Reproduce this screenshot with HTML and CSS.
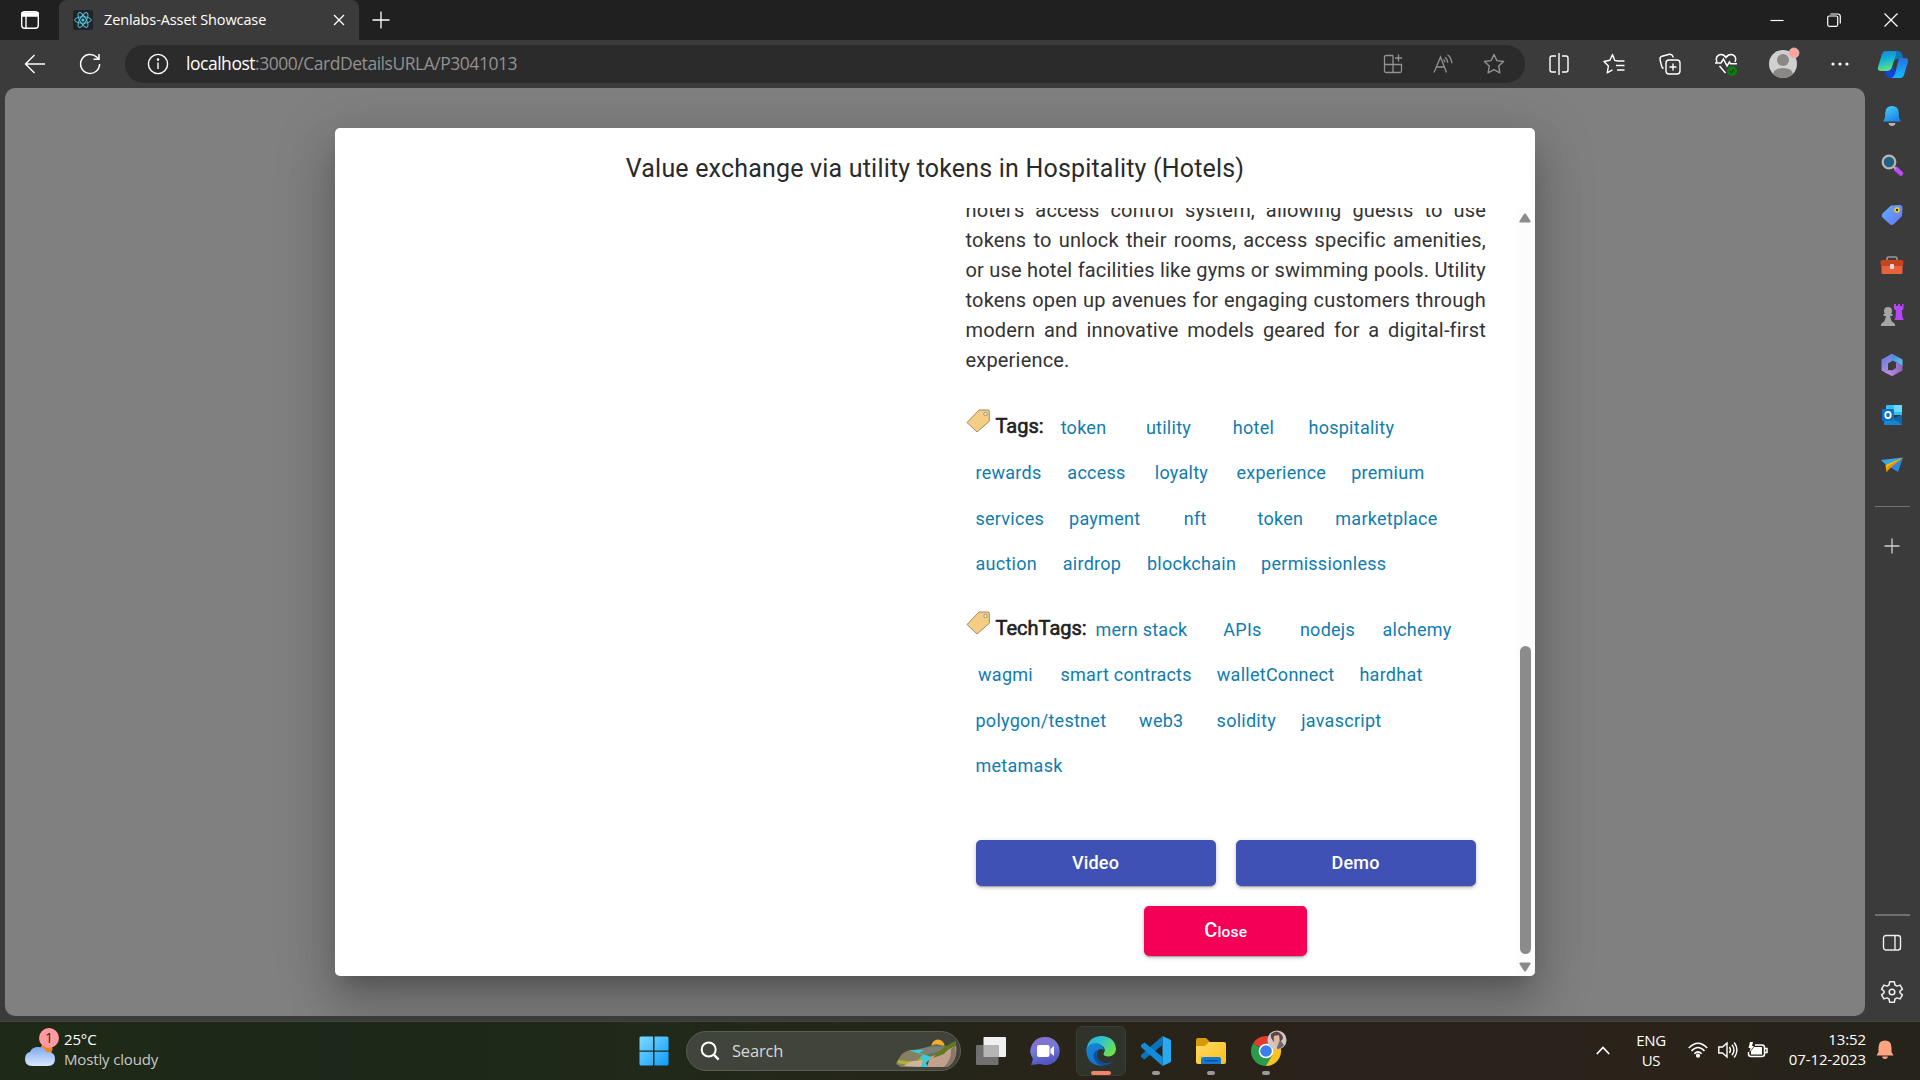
FILE: index.html
```html
<!DOCTYPE html>
<html lang="en">
<head>
<meta charset="utf-8">
<title>Zenlabs-Asset Showcase</title>
<link rel="stylesheet" href="styles.css">
</head>
<body>
<div class="screen">
  <header class="titlebar">
    <svg class="tab-actions" width="20" height="20" viewBox="0 0 20 20" fill="none" stroke="#fff" stroke-width="1.4"><rect x="1.7" y="1.7" width="16.6" height="16.6" rx="3"/><path d="M2 3h16v3H2z" fill="#fff"/><path d="M6 6v12"/></svg>
    <div class="tab">
      <svg width="20" height="20" viewBox="0 0 20 20" fill="none" stroke="#58c4dc" stroke-width="1"><rect width="20" height="20" rx="2" fill="#20232a" stroke="none"/><ellipse cx="10" cy="10" rx="8.3" ry="3.2"/><ellipse cx="10" cy="10" rx="8.3" ry="3.2" transform="rotate(60 10 10)"/><ellipse cx="10" cy="10" rx="8.3" ry="3.2" transform="rotate(120 10 10)"/><circle cx="10" cy="10" r="1.6" fill="#58c4dc" stroke="none"/></svg>
      <span class="tab-title">Zenlabs-Asset Showcase</span>
      <svg class="tab-close" width="12" height="12" viewBox="0 0 12 12" stroke="#fff" stroke-width="1.3"><path d="M1 1l10 10M11 1L1 11"/></svg>
    </div>
    <svg class="new-tab" width="18" height="18" viewBox="0 0 18 18" stroke="#fff" stroke-width="1.3"><path d="M9 .5v17M.5 9h17"/></svg>
    <div class="window-controls">
      <svg width="14" height="14" viewBox="0 0 14 14" stroke="#fff" stroke-width="1.2"><path d="M.5 7.5h13"/></svg>
      <svg width="14" height="14" viewBox="0 0 14 14" fill="none" stroke="#fff" stroke-width="1.2"><rect x=".7" y="3" width="10" height="10.3" rx="1.5"/><path d="M3.3 1h7.5Q13.3 1 13.3 3.5v7"/></svg>
      <svg width="14" height="14" viewBox="0 0 14 14" stroke="#fff" stroke-width="1.2"><path d="M.5.5l13 13M13.5.5l-13 13"/></svg>
    </div>
  </header>

  <nav class="toolbar">
    <svg class="back" width="22" height="20" viewBox="0 0 22 20" fill="none" stroke="#fff" stroke-width="1.4"><path d="M21 10H1.5M10.5 1l-9 9 9 9"/></svg>
    <svg class="reload" width="22" height="22" viewBox="0 0 22 22" fill="none" stroke="#fff" stroke-width="1.5"><path d="M20.6 11a9.5 9.5 0 1 1-3-7l2.4 2.2M20 1v5.3h-5.5"/></svg>
    <div class="address">
      <svg width="22" height="22" viewBox="0 0 22 22" fill="none" stroke="#fff" stroke-width="1.4"><circle cx="11" cy="11" r="9.6"/><path d="M11 9.5v6.5"/><circle cx="11" cy="6.6" r=".6" fill="#fff"/></svg>
      <span class="url"><b>localhost</b>:3000/CardDetailsURLA/P3041013</span>
      <div class="address-icons">
        <svg width="20" height="20" viewBox="0 0 20 20" fill="none" stroke="#929292" stroke-width="1.3"><path d="M10 1.5H3Q1.5 1.5 1.5 3v14q0 1.500 1.500 1.500h14q1.500 0 1.500-1.500v-6.500H1.500M10 1.500v17M15.500 .5v7M12 4h7"/></svg>
        <svg width="20" height="20" viewBox="0 0 20 20" fill="none" stroke="#929292" stroke-width="1.300"><path d="M1 18.500L7.500 3 13.500 18.500M3.200 13h8.200M12 3.200q2.700 2 2.700 5.600M14.500 .8q4.200 3 4.200 8.500M10.500 5.500q1.300 1 1.300 2.800"/></svg>
        <svg width="22" height="22" viewBox="0 0 22 22" fill="none" stroke="#929292" stroke-width="1.400" stroke-linejoin="round"><path d="M11 1.500l2.900 6.100 6.700.9-4.900 4.600 1.200 6.700-5.900-3.200-5.900 3.200 1.200-6.700L1.400 8.500l6.700-.9z"/></svg>
      </div>
    </div>
    <div class="actions">
      <svg width="20" height="22" viewBox="0 0 20 22" fill="none" stroke="#fff" stroke-width="1.400"><path d="M7 3H3Q1 3 1 5v12q0 2 2 2h4M13 3h4q2 0 2 2v12q0 2-2 2h-4M10 0v22"/></svg>
      <svg width="22" height="22" viewBox="0 0 22 22" fill="none" stroke="#fff" stroke-width="1.400" stroke-linejoin="round"><path d="M14.500 7.800l-2.700-.3L9.500 1.500 6.900 7.300 1 8.500l4.400 4.600-1.200 6.700L9.500 16.800M14 8h7.500M13 12.500h8.500M14 17h7.500"/></svg>
      <svg width="22" height="22" viewBox="0 0 22 22" fill="none" stroke="#fff" stroke-width="1.400"><rect x="7" y="7" width="14" height="14" rx="3"/><path d="M14 10.500v7M10.500 14h7M4.500 15.500Q3 15 2.600 13L1 6.500Q.6 4 3 3.200L10.500 1.300Q13 1 14 3.500l.2 1"/></svg>
      <svg width="22" height="22" viewBox="0 0 22 22" fill="none" stroke="#fff" stroke-width="1.500"><path d="M1.800 9Q0 3.500 4.500 1.800 8.500.8 11 4.500 13.500.8 17.500 1.800 22 3.500 20.200 9M0 10h6l2.500-4 3.500 7 2.500-4 1.200 1.800H22M4.500 13l6 7"/><circle cx="17" cy="18" r="5" fill="#107c10" stroke="none"/><path d="M14.800 18l1.600 1.600 2.800-3.200" stroke="#174e17"/></svg>
      <svg width="32" height="32" viewBox="0 0 32 32"><circle cx="15" cy="17" r="14" fill="#d2d0ce"/><circle cx="15" cy="13" r="6" fill="#8a8886"/><path d="M5 27q1-6 10-6t10 6q-4 4-10 4T5 27z" fill="#8a8886"/><circle cx="26" cy="6" r="5" fill="#ffa39c" stroke="#c9c4c2" stroke-width=".8"/></svg>
      <svg width="18" height="4" viewBox="0 0 18 4" fill="#fff"><circle cx="2" cy="2" r="1.600"/><circle cx="9" cy="2" r="1.600"/><circle cx="16" cy="2" r="1.600"/></svg>
      <svg width="30" height="27" viewBox="0 0 30 27"><defs><linearGradient id="cpA" x1="0" y1="0" x2=".2" y2="1"><stop offset="0" stop-color="#1a7fd8"/><stop offset=".45" stop-color="#0fafd8"/><stop offset="1" stop-color="#5ee08a"/></linearGradient><linearGradient id="cpB" x1="0" y1="0" x2="0" y2="1"><stop offset="0" stop-color="#2670e0"/><stop offset="1" stop-color="#18b8ff"/></linearGradient></defs><path d="M14 0h6q3 0 4 3l1.500 5H19q-2 0-3 3L14 4z" fill="#0d78b5"/><path d="M6 20h7l2-6 4 13h-7q-3 0-4-3z" fill="#1543d8"/><path d="M7 0h9q3 0 2 3l-4 13q-1 4-5 4H3q-4 0-3-4L4 3q1-3 3-3z" fill="url(#cpA)"/><path d="M21 7h6q4 0 3 4l-4 13q-1 3-4 3h-9q3-1 4-4l3-12q1-4 1-4z" fill="url(#cpB)"/></svg>
    </div>
  </nav>

  <div class="workspace">
    <main class="page">
      <section class="dialog">
        <h2 class="dialog-title">Value exchange via utility tokens in Hospitality (Hotels)</h2>
        <div class="dialog-body">
          <div class="details">
            <p class="description">hotel’s access control system, allowing guests to use tokens to unlock their rooms, access specific amenities, or use hotel facilities like gyms or swimming pools. Utility tokens open up avenues for engaging customers through modern and innovative models geared for a digital-first experience.</p>
            <div class="tag-group">
              <div class="tag-row first"><svg width="24" height="24" viewBox="0 0 24 24"><path d="M13 1h9q1.300 0 1.300 1.300v10L11 23 1 13.500z" fill="#f5cd84" stroke="#a08a62" stroke-width="1" stroke-linejoin="round"/><circle cx="19.500" cy="5" r="1.700" fill="#fff2d5" stroke="#857c69" stroke-width=".8"/></svg><span class="label">Tags:</span><a>token</a><a>utility</a><a>hotel</a><a>hospitality</a></div>
              <div class="tag-row"><a>rewards</a><a>access</a><a>loyalty</a><a>experience</a><a>premium</a></div>
              <div class="tag-row"><a>services</a><a>payment</a><a>nft</a><a>token</a><a>marketplace</a></div>
              <div class="tag-row"><a>auction</a><a>airdrop</a><a>blockchain</a><a>permissionless</a></div>
            </div>
            <div class="tag-group">
              <div class="tag-row first"><svg width="24" height="24" viewBox="0 0 24 24"><path d="M13 1h9q1.300 0 1.300 1.300v10L11 23 1 13.500z" fill="#f5cd84" stroke="#a08a62" stroke-width="1" stroke-linejoin="round"/><circle cx="19.500" cy="5" r="1.700" fill="#fff2d5" stroke="#857c69" stroke-width=".8"/></svg><span class="label tech">TechTags:</span><a>mern stack</a><a>APIs</a><a>nodejs</a><a>alchemy</a></div>
              <div class="tag-row"><a>wagmi</a><a>smart contracts</a><a>walletConnect</a><a>hardhat</a></div>
              <div class="tag-row"><a>polygon/testnet</a><a>web3</a><a>solidity</a><a>javascript</a></div>
              <div class="tag-row"><a>metamask</a></div>
            </div>
            <div class="buttons"><button class="btn">Video</button><button class="btn">Demo</button></div>
            <button class="btn close"><span class="cap">C</span>lose</button>
          </div>
          <div class="scrollbar">
            <svg width="12" height="10" viewBox="0 0 12 10"><path d="M5 1q1-1.200 2 0l4.500 7q.5 1.500-1 1.500h-9Q0 9.500.5 8z" fill="#8b8b8b"/></svg>
            <div class="thumb"></div>
            <svg width="12" height="10" viewBox="0 0 12 10"><path d="M5 9q1 1.200 2 0l4.500-7Q12 .5 10.500.5h-9Q0 .5.500 2z" fill="#8b8b8b"/></svg>
          </div>
        </div>
      </section>
    </main>

    <aside class="sidebar">
      <div class="side-item"><svg width="20" height="22" viewBox="0 0 20 22"><defs><linearGradient id="bl" x1="0" y1="0" x2=".6" y2="1"><stop offset="0" stop-color="#4bd2f4"/><stop offset="1" stop-color="#1a86ea"/></linearGradient></defs><path d="M6.500 18h7q-.5 3-3.500 3t-3.500-3z" fill="#b6b6b6"/><path d="M10 1q6.500 0 6.800 7v4l2 4.500H1.200L3.200 12V8Q3.500 1 10 1z" fill="url(#bl)"/></svg></div>
      <div class="side-item"><svg width="22" height="22" viewBox="0 0 22 22"><path d="M15 15l5 4.500" stroke="#c04af5" stroke-width="4.500" stroke-linecap="round"/><path d="M12 12l3 3" stroke="#aaa" stroke-width="2"/><circle cx="8" cy="8" r="6.300" fill="#23607f" stroke="#b9b6b2" stroke-width="2.200"/></svg></div>
      <div class="side-item"><svg width="22" height="22" viewBox="0 0 22 22"><defs><linearGradient id="tg" x1="0" y1="0" x2="1" y2="1"><stop offset="0" stop-color="#5fb0ff"/><stop offset="1" stop-color="#6d72f4"/></linearGradient></defs><path d="M10 1.500L18.500 1q3 0 3 3l-.5 8-8 8q-2.500 2-4.500 0L1.500 13.500q-1.500-2 0-4z" fill="url(#tg)"/><circle cx="16" cy="6" r="2" fill="#333" stroke="#ffd400" stroke-width="1.500"/></svg></div>
      <div class="side-item"><svg width="24" height="20" viewBox="0 0 24 20"><path d="M7 6V3.500Q7 2 8.500 2h7Q17 2 17 3.500V6" fill="none" stroke="#999" stroke-width="1.600"/><rect x="1.500" y="9" width="21" height="10" rx="1.500" fill="#e8633c"/><path d="M2 5h20q1.500 0 1.500 1.500L23 11H1L.500 6.500Q.500 5 2 5z" fill="#c9431f"/><rect x="10" y="9" width="4" height="5" rx="1" fill="#ddd"/></svg></div>
      <div class="side-item"><svg width="24" height="24" viewBox="0 0 24 24"><path d="M14 1h2v2h2V1h2v2h2V1h1.500v5l-1.700 1.500.7 7 1.500 2.500h-9.500l1-2.500.5-7L14 6z" fill="#b545f5"/><circle cx="8" cy="8" r="4" fill="#a5a5a5"/><path d="M3.500 11h9v2H10l1.500 5 3.500 3v2H1v-2l3.500-3L6 13H3.500z" fill="#a5a5a5"/></svg></div>
      <div class="side-item"><svg width="22" height="24" viewBox="0 0 22 24"><defs><linearGradient id="ma" x1="0" y1="0" x2=".4" y2="1"><stop offset="0" stop-color="#4f7fdc"/><stop offset="1" stop-color="#b18be6"/></linearGradient><linearGradient id="mb" x1="0" y1="0" x2="1" y2="1"><stop offset="0" stop-color="#4a6fd6"/><stop offset="1" stop-color="#58d0f8"/></linearGradient><linearGradient id="mc" x1="0" y1="0" x2="1" y2="0"><stop offset="0" stop-color="#c09af0"/><stop offset="1" stop-color="#8b62b8"/></linearGradient></defs><path d="M11 .800L21.500 6.500V13l-6.500-4-4-1.500L7 9V3z" fill="url(#mb)"/><path d="M11 .800V8L7 10.500V17L5 20 .500 17.500V6.500z" fill="url(#ma)"/><path d="M21.500 12v5.500L11 23.200 4 19.500l4-2.500 3 .5 4-2.500V9.500z" fill="url(#mc)"/></svg></div>
      <div class="side-item"><svg width="22" height="22" viewBox="0 0 22 22"><path d="M6 1h14q1 0 1 1v9H5V2q0-1 1-1z" fill="#34bdf1"/><path d="M13 1h8v7h-8z" fill="#67dcff"/><path d="M3 11l9 4 9-4v9q0 1-1 1H4q-1 0-1-1z" fill="#1687cf"/><path d="M21 11v9.500L12 15z" fill="#0b68b0"/><rect x="1" y="5" width="12" height="12" rx="1" fill="#0e70c9"/><ellipse cx="7" cy="11" rx="2.700" ry="3.200" fill="none" stroke="#fff" stroke-width="1.800"/></svg></div>
      <div class="side-item"><svg width="24" height="20" viewBox="0 0 24 20"><path d="M1 5L23 2.500 7 11z" fill="#36a5ee"/><path d="M23 2.500L18 17l-8-5z" fill="#2989e5"/><path d="M23 2.500L5.500 10 6.500 17l4-4.500z" fill="#fbb800"/><path d="M6.500 17l1-5.500L23 2.500 10 13z" fill="#e69100"/></svg></div>
      <div class="divider"></div>
      <svg class="side-plus" width="16" height="16" viewBox="0 0 16 16" stroke="#d0d0d0" stroke-width="1.300"><path d="M8 .500v15M.5 8h15"/></svg>
      <div class="side-bottom">
        <div class="divider low"></div>
        <div class="side-item"><svg width="20" height="18" viewBox="0 0 20 18" fill="none" stroke="#eee" stroke-width="1.400"><rect x="1.500" y="1.500" width="17" height="14.500" rx="2.500"/><path d="M13 1.500V16"/></svg></div>
        <div class="side-item"><svg width="24" height="24" viewBox="0 0 24 24" fill="none" stroke="#eee" stroke-width="1.500" stroke-linejoin="round"><circle cx="12" cy="12" r="2.800"/><path d="M9.700 1.700h4.600l.7 3.300 1.900 1.100 3.200-1 2.300 4-2.500 2.200v1.400l2.500 2.200-2.300 4-3.200-1L15 19l-.7 3.300H9.700L9 19l-1.900-1.100-3.200 1-2.300-4 2.500-2.200v-1.400L1.600 9.100l2.300-4 3.200 1L9 5z"/></svg></div>
      </div>
    </aside>
  </div>

  <footer class="taskbar">
    <div class="weather">
      <div class="weather-icon">
        <svg width="34" height="38" viewBox="0 0 34 38"><defs><linearGradient id="cl" x1="0" y1="0" x2="0" y2="1"><stop offset="0" stop-color="#80a9ee"/><stop offset="1" stop-color="#d8e8ff"/></linearGradient></defs><circle cx="23.500" cy="18" r="6" fill="#f58220"/><path d="M9 35q-7 0-7-7 0-6 5-7 2-5 8-5 7 0 8 5h2q7 0 7 7 0 7-7 7z" fill="url(#cl)"/></svg>
        <span class="badge">1</span>
      </div>
      <div class="weather-text"><span>25°C</span><span class="dim">Mostly cloudy</span></div>
    </div>
    <div class="apps">
      <svg width="30" height="30" viewBox="0 0 30 30"><defs><linearGradient id="wn" x1="0" y1="0" x2="1" y2="1"><stop offset="0" stop-color="#7cdbff"/><stop offset="1" stop-color="#0e9bff"/></linearGradient></defs><path d="M2 .500h12v14H.500V2Q.500.500 2 .500zM15.500.500H28q1.500 0 1.500 1.500v12.500h-14zM.500 15.800H14v13.700H2Q.500 29.500.500 28zM15.500 15.800h14V28q0 1.500-1.500 1.500H15.500z" fill="url(#wn)"/></svg>
      <div class="search">
        <svg width="20" height="20" viewBox="0 0 20 20" fill="none" stroke="#fff" stroke-width="2"><circle cx="8.700" cy="8.500" r="7"/><path d="M13.700 13.700l5 5" stroke-width="2.400"/></svg>
        <span>Search</span>
        <svg class="scene" width="62" height="30" viewBox="0 0 62 30"><circle cx="43" cy="8" r="6.500" fill="#f9ab2d"/><path d="M10 14l19-4 12-4 14 3-2 7-20 4z" fill="#667350"/><path d="M14 13l20-4 20-1-8 5-20 5z" fill="#7a7f78"/><path d="M1 26q6-14 15-14l17 2-3 15H6z" fill="#867f62"/><path d="M3 22l16 2 12-7v3l-13 8-16-3z" fill="#b1b130"/><path d="M9 28q7-6 13-5l6-1-1 7z" fill="#cfb59d"/><path d="M14 12h15l-5 3 13 4-6 6 2 4h-8q4-4 3-7l-3-3 3-2-9-3z" fill="#36ccd8"/><path d="M32 29l3-10 14-5 12-7q2 16-9 22z" fill="#c1a18e"/><path d="M49 29q8-8 7-18l4-3q3 14-7 21z" fill="#8d7568"/><path d="M38 20q8-11 23-17v5q-8 2-12 8z" fill="#607b1b"/></svg>
      </div>
      <svg class="task-view" width="32" height="30" viewBox="0 0 32 30"><rect x="8.500" y="1" width="22.500" height="20" rx="1" fill="#f0f0f0"/><rect x="1" y="9" width="22.500" height="20" rx="1" fill="#707070"/><path d="M8.500 9h15v12h-15z" fill="#b5b5b5"/></svg>
      <svg class="chat" width="30" height="30" viewBox="0 0 30 30"><defs><linearGradient id="ct" x1="0" y1="0" x2=".3" y2="1"><stop offset="0" stop-color="#8a6bcb"/><stop offset=".5" stop-color="#7779d8"/><stop offset="1" stop-color="#5356c4"/></linearGradient></defs><path d="M15.500 1a14 14 0 1 1-5 27L1 29l2-6A14 14 0 0 1 15.500 1z" fill="url(#ct)"/><rect x="7" y="9" width="12.500" height="12" rx="2" fill="#fff"/><path d="M20.500 13l3.500-3v10l-3.500-3z" fill="#fff"/></svg>
      <div class="app active"><svg width="30" height="30" viewBox="0 0 30 30"><defs><linearGradient id="ea" x1="0" y1="0" x2="1" y2=".6"><stop offset="0" stop-color="#2ba9e0"/><stop offset=".5" stop-color="#30c6c8"/><stop offset="1" stop-color="#6fe04a"/></linearGradient><linearGradient id="eb" x1="0" y1="0" x2=".5" y2="1"><stop offset="0" stop-color="#1389d8"/><stop offset="1" stop-color="#1670ce"/></linearGradient></defs><path d="M.500 14Q2 0 16 0q13 1 14 13-.5 7-7 7.500-7 0-5-4 2-3-1-6-7-6-16.500 3.500z" fill="url(#ea)"/><path d="M.300 14q2-7 10-7 7 1 7.500 7-5-3-7 2-1 8 6 13.800Q1 30 .300 14z" fill="url(#eb)"/><path d="M11 14q-3 9 6 12.500 6 2 11.500-3.500Q24 30 16 30 7 26 7.500 19q1-4 3.500-5z" fill="#0c4f9c"/></svg><i class="mark"></i></div>
      <div class="app"><svg width="30" height="30" viewBox="0 0 30 30"><path d="M21.500 0L29 3.500q1 .5 1 1.500v20q0 1-1 1.500L21.500 30z" fill="#29a9f2"/><path d="M21.500 0v9L3.500 23.500 0 21v-2z" fill="#0b72bd"/><path d="M3.500 6.500L0 9v2l21.500 19v-9z" fill="#148bd8"/></svg><i class="mark"></i></div>
      <div class="app"><svg width="30" height="30" viewBox="0 0 30 30"><defs><linearGradient id="fd" x1="0" y1="0" x2="1" y2="1"><stop offset="0" stop-color="#ffda62"/><stop offset="1" stop-color="#fbc01d"/></linearGradient></defs><path d="M0 4q0-2 2-2h8l4 4v6H0z" fill="#d89a0a"/><path d="M0 10h9l4-4h15q2 0 2 2v18q0 2-2 2H2q-2 0-2-2z" fill="url(#fd)"/><path d="M5 28v-5q0-2 2-2h16q2 0 2 2v5z" fill="#1677d0"/><path d="M9 24.700h13" stroke="#0a4a94" stroke-width="1.300"/></svg><i class="mark"></i></div>
      <div class="app"><svg width="32" height="36" viewBox="0 0 32 36" class="chrome"><path d="M15 21L2 13.500A15 15 0 0 1 28 13.500H15z" fill="#e33b2e"/><path d="M15 21V13.500h13A15 15 0 0 1 15 36z" fill="#fcc31e"/><path d="M2 13.500A15 15 0 0 0 15 36l6.500-11z" fill="#2a9d4a"/><circle cx="15" cy="21" r="7.300" fill="#fff"/><circle cx="15" cy="21" r="5.800" fill="#3d7eea"/><circle cx="26" cy="10" r="9.600" fill="#d0c7c6"/><path d="M20 4q6-5 10 0 4 4 0 7l-7 1q-4-4-3-8z" fill="#5b4548"/><path d="M23 6l5-1 1 7-4 4q-3-5-2-10z" fill="#ddb8a5"/><path d="M26 17l3-7 4 5q-3 4-7 4z" fill="#73676a"/></svg><i class="mark"></i></div>
    </div>
    <div class="tray">
      <svg class="chev" width="14" height="9" viewBox="0 0 14 9" fill="none" stroke="#fff" stroke-width="1.700"><path d="M.8 8L7 1.500 13.200 8"/></svg>
      <div class="lang"><span>ENG</span><span>US</span></div>
      <svg class="wifi" width="20" height="16" viewBox="0 0 20 16" fill="none" stroke="#fff" stroke-width="1.600"><path d="M.8 6Q10-3.500 19.200 6M3.500 9Q10 2 16.500 9M6.300 11.700Q10 8 13.700 11.700"/><circle cx="10" cy="13.700" r="1.300" fill="#fff"/></svg>
      <svg class="sound" width="20" height="18" viewBox="0 0 20 18" fill="none" stroke="#fff" stroke-width="1.400"><path d="M.8 6h3.700L9 2v14l-4.500-4H.8zM11.500 6q2 3 0 6M14 3.800q4 5.200 0 10.400M16.200 1.500q5.500 7.500 0 15"/></svg>
      <svg class="battery" width="21" height="18" viewBox="0 0 21 18" fill="none" stroke="#fff" stroke-width="1.500"><path d="M8 4h7q2.500 0 2.500 2.500V13q0 2.500-2.500 2.500H4Q1.500 15.500 1.500 13v-2M18 7.500h2v4h-2"/><path d="M7 6h8v7.500H4V10z" fill="#fff" stroke="none"/><path d="M3 1l-1.500 6h2l-1 4L7 5H5l1-4z" fill="#fff" stroke="none"/></svg>
      <div class="clock"><span>13:52</span><span>07-12-2023</span></div>
      <svg class="bell" width="18" height="20" viewBox="0 0 18 20" fill="#ffa383"><path d="M9 .500q6.500 0 6.500 7v4.500l2 3.500H.500l2-3.500V7.500Q2.500.500 9 .500zM6 16.500h6q-.5 2.500-3 2.500t-3-2.500z"/></svg>
    </div>
  </footer>
</div>
</body>
</html>
```
FILE: styles.css
```css
* { box-sizing: border-box; }
body { margin: 0; background: #3b3b3b; font-family: "Open Sans", "Noto Sans", sans-serif; color: #fff; }
svg { display: block; flex: none; overflow: visible; }
.screen { width: 1920px; height: 1080px; display: flex; flex-direction: column; overflow: hidden; }

/* Window title bar */
.titlebar { height: 40px; background: #202020; display: flex; align-items: center; flex: none; }
.tab-actions { margin-left: 20px; }
.tab { margin-left: 19px; width: 300px; height: 40px; padding: 0 14px; background: #3b3b3b; border-radius: 8px 8px 0 0; display: flex; align-items: center; }
.tab-title { margin: -2px 0 0 11px; font-size: 14.5px; letter-spacing: -0.1px; white-space: nowrap; }
.tab-close { margin-left: auto; }
.new-tab { margin-left: 13px; margin-top: -1px; }
.window-controls { margin-left: auto; margin-right: 22px; display: flex; gap: 43px; }

/* Address row */
.toolbar { height: 48px; background: #3b3b3b; display: flex; align-items: center; flex: none; }
.back { margin-left: 24px; }
.reload { margin-left: 33px; }
.address { margin-left: 24px; width: 1400px; height: 38px; border-radius: 19px; background: #2b2b2b; padding: 0 20px 0 22px; display: flex; align-items: center; }
.url { margin: -2px 0 0 17px; font-size: 17.5px; letter-spacing: -0.47px; color: #929292; white-space: nowrap; }
.url b { font-weight: 400; color: #fff; }
.address-icons { margin-left: auto; display: flex; align-items: center; gap: 30px; }
.actions { display: flex; align-items: center; margin-left: 24px; }
.actions svg + svg { margin-left: 34px; }
.actions svg:nth-child(5) { margin-left: 31px; margin-top: -3px; }
.actions svg:nth-child(6) { margin-left: 31px; }
.actions svg:nth-child(7) { margin-left: 29px; }

.workspace { height: 933px; display: flex; flex: none; }
.page { margin-left: 5px; width: 1860px; height: 928px; border-radius: 10px; background: #808080; display: flex; align-items: center; justify-content: center; overflow: hidden; }

/* Dialog */
.dialog { width: 1200px; height: 848px; background: #fff; border-radius: 5px; display: flex; flex-direction: column; color: #212121; font-family: Roboto, sans-serif; box-shadow: 0 14px 19px -9px rgba(0,0,0,.2), 0 30px 48px 4px rgba(0,0,0,.14), 0 11px 58px 10px rgba(0,0,0,.12); }
.dialog-title { margin: 0; height: 80px; padding: 21px 30px 19px; font-size: 25px; line-height: 40px; font-weight: 400; letter-spacing: .0075em; text-align: center; color: #2a2a2a; }
.dialog-body { height: 768px; display: flex; justify-content: flex-end; overflow: hidden; }
.details { width: 520.5px; display: flex; flex-direction: column; }
.description { margin: -13px 0 0; font-size: 20px; line-height: 30px; letter-spacing: .00938em; text-align: justify; color: #333; }
.tag-group { margin-top: 30px; height: 173px; }
.tag-group + .tag-group { margin-top: 29px; }
.tag-row { display: flex; gap: 5px; height: 45.5px; align-items: center; white-space: nowrap; }
.tag-row a { min-width: 80px; padding: 0 10px; text-align: center; color: #0f7cb0; font-size: 18px; line-height: 30px; letter-spacing: .26px; }
.first svg { margin: -14px 1px 0 0; }
.label { width: 48px; margin: -3px -5px 0 0; font-size: 20px; -webkit-text-stroke: .6px #212121; }
.label.tech { width: 90px; }
.buttons { display: flex; gap: 20px; padding: 0 10px; margin-top: 60px; }
.btn { width: 240px; height: 46px; border: 0; padding: 0 0 2px; border-radius: 5px; background: #3f51b5; color: #fff; font: 500 18px Roboto, sans-serif; letter-spacing: .2px; box-shadow: 0 4px 1px -3px rgba(0,0,0,.2), 0 2px 3px rgba(0,0,0,.14), 0 1px 6px rgba(0,0,0,.12); }
.close { width: 163px; height: 50px; flex: none; margin: 20px auto 0; background: #f50057; font-size: 15.5px; }
.cap { font-size: 20px; }
.scrollbar { width: 19px; margin-left: 30px; height: 768px; padding: 5px 1px 4px 0; background: #fcfcfc; border-radius: 0 0 5px; display: flex; flex-direction: column; align-items: center; }
.thumb { width: 11px; height: 308px; margin: auto 0 8px; border-radius: 6px; background: #8b8b8b; }

/* Edge sidebar */
.sidebar { width: 54px; padding-top: 3px; display: flex; flex-direction: column; align-items: center; }
.side-item { height: 50px; display: flex; align-items: center; }
.side-item + .side-item { position: relative; top: -1px; }
.divider { width: 35px; height: 1px; margin-top: 15px; background: #707070; flex: none; }
.side-plus { margin-top: 31px; }
.side-bottom { margin-top: auto; display: flex; flex-direction: column; align-items: center; padding-bottom: 3px; }
.divider.low { height: 2px; margin: 0 0 2px; }

/* Taskbar */
.taskbar { height: 59px; border-top: 1px solid #41453a; background: linear-gradient(90deg, #1f2917, #1c2819 17%, #20291a 34%, #28241a 55%, #2a221b 75%, #29231a 90%, #25231a); display: flex; align-items: center; font-size: 15px; line-height: 20px; }
.weather { width: 616px; margin-left: 23px; display: flex; align-items: center; }
.weather-icon { position: relative; margin-top: -3px; }
.badge { position: absolute; left: 16px; top: -3px; width: 20px; height: 20px; border-radius: 50%; background: #ff9aa0; color: #3b2022; text-align: center; font-size: 14px; }
.weather-text { display: flex; flex-direction: column; margin: -4px 0 0 7px; letter-spacing: -.15px; }
.dim { color: #c8c8c8; }
.apps { display: flex; align-items: center; margin-top: -1px; }
.search { margin-left: 17px; width: 275px; height: 40px; border: 1px solid #5a5d51; border-radius: 20px; background: #40443b; display: flex; align-items: center; padding-left: 13px; color: #d8d8d8; font-size: 16.5px; letter-spacing: -.2px; }
.search span { margin-left: 12px; }
.scene { margin-left: auto; margin-right: 3px; margin-top: 4px; }
.task-view { margin-left: 14px; }
.chat { margin-left: 23px; }
.app { width: 50px; height: 50px; margin-left: 5px; padding-top: 9px; border: 1px solid transparent; border-radius: 6px; display: flex; flex-direction: column; align-items: center; justify-content: space-between; }
.chat + .app { margin-left: 16px; }
.active { background: #30332a; border-color: #3a3d34; }
.mark { width: 8px; height: 4px; border-radius: 2px; background: #999; }
.active .mark { width: 20px; background: #f5826a; }
.chrome { margin: -6px 0 0 2px; }
.tray { display: flex; align-items: center; margin-left: auto; margin-right: 26px; margin-top: -2px; }
.lang { display: flex; flex-direction: column; align-items: center; width: 32px; margin: -1px 0 0 25px; letter-spacing: -.3px; }
.wifi { margin-left: 21px; }
.sound { margin-left: 10px; }
.battery { margin-left: 9px; }
.clock { display: flex; flex-direction: column; align-items: flex-end; width: 90px; margin: -2px 0 0 8px; letter-spacing: -.1px; }
.bell { margin-left: 10px; }
```
